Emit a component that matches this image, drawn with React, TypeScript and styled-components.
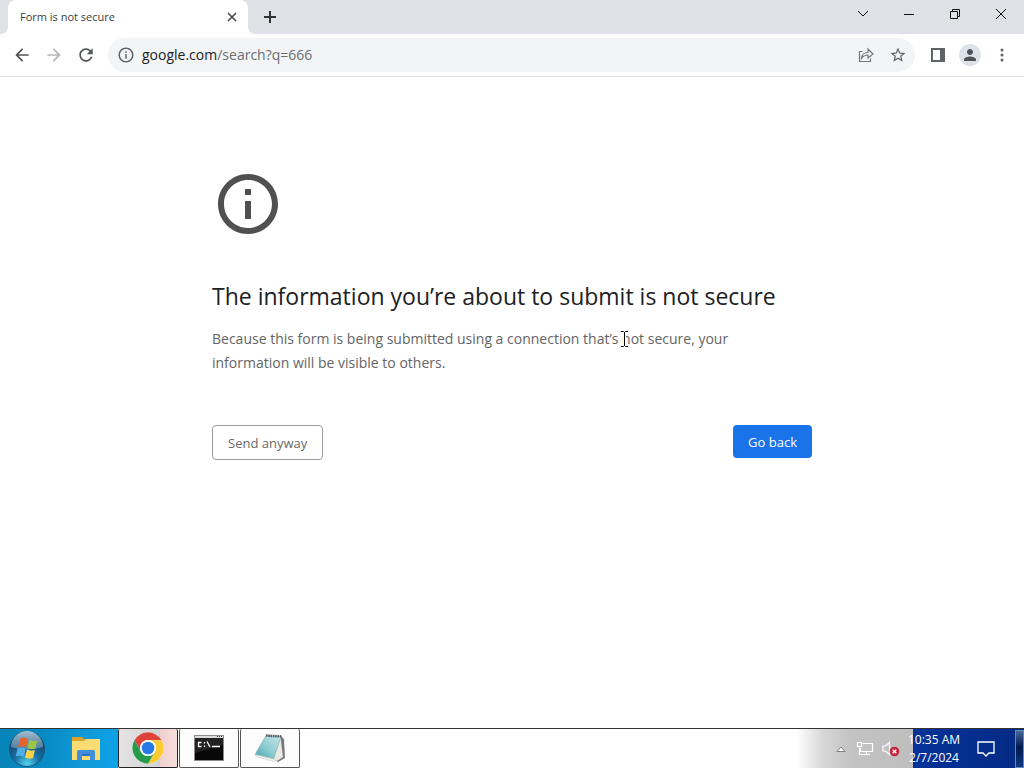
import React from "react";
import styled, { createGlobalStyle } from "styled-components";

const GlobalStyle = createGlobalStyle`
  * { box-sizing: border-box; }
  body { margin: 0; font-family: "Open Sans", "Noto Sans", sans-serif; background: #fff; }
  button { font-family: inherit; margin: 0; padding: 0; border: 0; background: none; }
  svg { display: block; }
`;

const Screen = styled.div`
  min-height: 100vh;
  display: flex;
  flex-direction: column;
`;

const TabStrip = styled.header`
  display: flex;
  align-items: stretch;
  height: 34px;
  padding-left: 8px;
  background: #dee1e6;
`;

const Tab = styled.div`
  position: relative;
  display: flex;
  align-items: center;
  justify-content: space-between;
  width: 240px;
  padding: 0 8px 0 12px;
  border-radius: 8px 8px 0 0;
  background: #fff;
  color: #3c4043;
  &::before, &::after {
    content: "";
    position: absolute;
    bottom: 0;
    width: 8px;
    height: 8px;
  }
  &::before { left: -8px; background: radial-gradient(circle at 0 0, #dee1e6 8px, #fff 8px); }
  &::after { right: -8px; background: radial-gradient(circle at 100% 0, #dee1e6 8px, #fff 8px); }
`;

const TabTitle = styled.span`
  font-size: 11px;
  line-height: 16px;
`;

const IconButton = styled.button<{ $w: number; $color?: string }>`
  display: flex;
  align-items: center;
  justify-content: center;
  flex: none;
  width: ${(p) => p.$w}px;
  color: ${(p) => p.$color ?? "#5f6368"};
`;

const WindowControls = styled.div`
  display: flex;
  align-items: stretch;
  margin-left: auto;
  padding-bottom: 6px;
`;

const Toolbar = styled.div`
  display: flex;
  align-items: center;
  height: 43px;
  padding: 0 6px;
  border-bottom: 1px solid #dadce0;
  background: #fff;
`;

const AddressBar = styled.div`
  display: flex;
  align-items: center;
  flex: 1;
  height: 34px;
  margin: 0 7px 0 6px;
  padding: 0 1px 0 2px;
  border-radius: 17px;
  background: #f2f4f5;
`;

const Url = styled.div`
  flex: 1;
  font-size: 14px;
  line-height: 20px;
  color: #6a6e72;
  b { font-weight: 400; color: #202124; }
`;

const Avatar = styled.span`
  display: flex;
  align-items: center;
  justify-content: center;
  width: 22px;
  height: 22px;
  border-radius: 50%;
  background: #dde1e8;
`;

const Page = styled.main`
  flex: 1;
  padding: 91px 24px 24px;
`;

const Warning = styled.section`
  max-width: 600px;
  margin: 0 auto;
`;

const Heading = styled.h1`
  margin: 40px 0 15px;
  font-size: 23px;
  font-weight: 400;
  line-height: 32px;
  color: #202124;
`;

const Message = styled.p`
  position: relative;
  margin: 0;
  padding-right: 48px;
  font-size: 14px;
  line-height: 24px;
  color: #646464;
`;

const TextCursor = styled.svg`
  position: absolute;
  left: 408px;
  top: 4px;
`;

const Actions = styled.div`
  display: flex;
  align-items: flex-start;
  justify-content: space-between;
  margin-top: 50px;
`;

const ActionButton = styled.button<{ $primary?: boolean }>`
  && {
    height: ${(p) => (p.$primary ? 33 : 35)}px;
    padding: 0 15px;
    border: ${(p) => (p.$primary ? "0" : "1px solid #9a9da0")};
    border-radius: 4px;
    background: ${(p) => (p.$primary ? "#1a73e8" : "#fff")};
    color: ${(p) => (p.$primary ? "#fff" : "#696969")};
    font-size: 13px;
  }
`;

const Taskbar = styled.footer`
  display: flex;
  align-items: stretch;
  height: 40px;
  border-top: 1px solid #333;
  background: #fff;
`;

const Launchers = styled.div`
  display: flex;
  width: 118px;
  background: linear-gradient(100deg, #0784b8 0%, #078ac2 35%, #1199d8 70%, #0ba2e9 100%);
`;

const TaskButton = styled.button<{ $active?: boolean }>`
  && {
    display: flex;
    align-items: center;
    justify-content: center;
    width: 60px;
    margin-right: 1px;
    border: 1px solid ${(p) => (p.$active ? "#222" : "#555")};
    border-top: 0;
    border-radius: 2px;
    background: ${(p) =>
      p.$active ? "linear-gradient(90deg, #e6e4e4 0%, #cfd2d5 70%, #f3cfd0 72%, #f6dede 100%)" : "#fdfdfd"};
  }
`;

const Tray = styled.div`
  display: flex;
  align-items: center;
  margin-left: auto;
  width: 228px;
  background: linear-gradient(90deg, #fff 0, #d8d8d8 26px, #c3c3c3 54px, #bebebe 117px, #05329a 117px, #032a83 100%);
`;

const TrayIcons = styled.div`
  display: flex;
  align-items: center;
  gap: 8px;
  padding-left: 38px;
`;

const Clock = styled.time`
  width: 62px;
  margin-left: 3px;
  font-size: 12px;
  line-height: 18px;
  text-align: center;
  white-space: nowrap;
  color: #fff;
`;

const ShowDesktop = styled.button`
  && {
    width: 9px;
    height: 38px;
    margin-left: auto;
    border: 1px solid #6787b9;
    background: linear-gradient(180deg, #476898, #02194f 45%, #0b3780);
  }
`;

const Stroke = ({ d, w, h, sw = 1 }: { d: string; w: number; h: number; sw?: number }) => (
  <svg width={w} height={h} viewBox={`0 0 ${w} ${h}`} fill="none" stroke="currentColor" strokeWidth={sw}>
    <path d={d} />
  </svg>
);

const Material = ({ d, size }: { d: string; size: number }) => (
  <svg width={size} height={size} viewBox="0 0 24 24" fill="currentColor">
    <path d={d} />
  </svg>
);

const INFO =
  "M11 17h2v-6h-2v6zm1-15C6.480 2 2 6.480 2 12s4.480 10 10 10 10-4.480 10-10S17.520 2 12 2zm0 18c-4.410 0-8-3.590-8-8s3.590-8 8-8 8 3.590 8 8-3.590 8-8 8zM11 9h2V7h-2v2z";
const BACK = "M20 11H7.830l5.590-5.590L12 4l-8 8 8 8 1.410-1.410L7.830 13H20v-2z";
const FORWARD = "M12 4l-1.410 1.410L16.170 11H4v2h12.170l-5.580 5.590L12 20l8-8z";
const RELOAD =
  "M17.650 6.350C16.200 4.900 14.210 4 12 4c-4.420 0-7.990 3.580-7.990 8s3.570 8 7.990 8c3.730 0 6.840-2.550 7.730-6h-2.080c-.820 2.330-3.040 4-5.650 4-3.310 0-6-2.690-6-6s2.690-6 6-6c1.660 0 3.140.690 4.220 1.780L13 11h7V4l-2.350 2.350z";
const STAR =
  "M22 9.240l-7.190-.620L12 2 9.190 8.630 2 9.240l5.460 4.730L5.820 21 12 17.270 18.180 21l-1.630-7.030L22 9.240zM12 15.400l-3.760 2.270 1-4.280-3.320-2.880 4.380-.380L12 6.100l1.710 4.040 4.380.380-3.320 2.880 1 4.280L12 15.400z";
const PERSON =
  "M12 12c2.210 0 4-1.790 4-4s-1.790-4-4-4-4 1.790-4 4 1.790 4 4 4zm0 2c-2.670 0-8 1.340-8 4v2h16v-2c0-2.660-5.330-4-8-4z";

const StartOrb = () => (
  <svg width="38" height="38" viewBox="0 0 38 38">
    <defs>
      <radialGradient id="orb" cx="50%" cy="92%" r="80%">
        <stop offset="0" stopColor="#52d7f0" />
        <stop offset=".45" stopColor="#176fa4" />
        <stop offset="1" stopColor="#164268" />
      </radialGradient>
      <linearGradient id="shine" x2="0" y2="1">
        <stop offset="0" stopColor="#b4cddd" stopOpacity=".9" />
        <stop offset="1" stopColor="#9cb9cc" stopOpacity=".4" />
      </linearGradient>
    </defs>
    <circle cx="19" cy="19" r="17.500" fill="url(#orb)" stroke="#175579" />
    <path d="M3 17a16 16 0 0 1 32 0q-16 5-32 0z" fill="url(#shine)" />
    <path d="M12.500 8.500q4-1.500 7.500.500l-2 8.500q-4-2-8-.500z" fill="#e8632c" />
    <path d="M21.300 10q3.700 1.800 8 .500l-2 8q-4 1.500-8-.500z" fill="#9cc545" />
    <path d="M9.700 18.300q4-1.500 8 .500l-2 8q-4-2-8-.500z" fill="#4eaee6" />
    <path d="M19 19.500q4 2 8 .500l-2 8q-4 1.500-8-.500z" fill="#fdd04a" />
  </svg>
);

const Folder = () => (
  <svg width="30" height="26" viewBox="0 0 30 26">
    <path d="M1 1h10l2 2h16v8H1z" fill="#dca52a" />
    <path d="M1 5h12l2-2h14v21H1z" fill="#fbdc72" />
    <path d="M6 24v-8q0-2 2-2h14q2 0 2 2v8h-5v-5h-8v5z" fill="#418fdc" />
    <path d="M11 18h8v2h-8z" fill="#2d6fc1" />
  </svg>
);

const ChromeLogo = () => (
  <svg width="32" height="32" viewBox="0 0 48 48">
    <circle cx="24" cy="24" r="23.500" fill="#fff" />
    <path d="M3.650 12.250A23.500 23.500 0 0 1 44.350 12.250H24A11.750 11.750 0 0 0 13.820 29.880z" fill="#dd4338" />
    <path d="M44.350 12.250A23.500 23.500 0 0 1 24 47.500L34.180 29.880A11.750 11.750 0 0 0 24 12.250z" fill="#fccc32" />
    <path d="M24 47.500A23.500 23.500 0 0 1 3.650 12.250L13.820 29.880A11.750 11.750 0 0 0 34.180 29.880z" fill="#279b4d" />
    <circle cx="24" cy="24" r="12" fill="#fff" />
    <circle cx="24" cy="24" r="9.500" fill="#2879e8" />
  </svg>
);

const Terminal = () => (
  <svg width="30" height="26" viewBox="0 0 30 26">
    <path d="M0 0h30v26H0z" fill="#8a8a8a" />
    <path d="M1 1h28v2H1z" fill="#ddd" />
    <path d="M23 1h1v1h-1zM25 1h1v1h-1zM27 1h1v1h-1z" fill="#333" />
    <path d="M1 3h28v22H1z" fill="#080808" />
    <path d="M1 3h28v7L1 18z" fill="#222" />
    <path d="M7.500 7.500H4.500v4h3M10.500 7v1.500M10.500 10.500v1.500M13 6.500l3 5.500M18 11.500h8" fill="none" stroke="#fff" strokeWidth="1.300" />
  </svg>
);

const Notepad = () => (
  <svg width="32" height="30" viewBox="0 0 32 30">
    <defs>
      <linearGradient id="note" x1="1" x2="0" y2="1">
        <stop offset="0" stopColor="#c9e8ea" />
        <stop offset=".55" stopColor="#8bcbd0" />
        <stop offset="1" stopColor="#43a3ae" />
      </linearGradient>
    </defs>
    <path d="M27 3l3 3 1 19-7 4-3-2z" fill="#777a79" />
    <path d="M26.500 4l2.500 20-6 4-4-2z" fill="#e9e8e2" />
    <path d="M12 2.500l15 1L19.500 26 1 21.500z" fill="url(#note)" stroke="#79a8ad" strokeWidth=".600" />
    <path d="M1 21.500L19.500 26l3 2-2 .800L2 23.500z" fill="#f4f4ef" stroke="#b9c1bd" strokeWidth=".500" />
    <path d="M12 2.500l16 1" stroke="#555" strokeWidth="2.500" strokeDasharray="1.500 .8" />
  </svg>
);

export default function App() {
  return (
    <Screen>
      <GlobalStyle />
      <TabStrip>
        <Tab>
          <TabTitle>Form is not secure</TabTitle>
          <IconButton $w={16} $color="#45494d" aria-label="Close tab">
            <Stroke w={10} h={10} sw={1.6} d="M1 1l8 8M9 1l-8 8" />
          </IconButton>
        </Tab>
        <IconButton $w={44} $color="#303336" aria-label="New tab">
          <Stroke w={12} h={12} sw={2} d="M6 0v12M0 6h12" />
        </IconButton>
        <WindowControls>
          <IconButton $w={46} $color="#111" aria-label="Search tabs">
            <Stroke w={12} h={8} d="M1 1l5 5 5-5" />
          </IconButton>
          <IconButton $w={46} $color="#111" aria-label="Minimize">
            <Stroke w={10} h={1} sw={2} d="M0 0h10" />
          </IconButton>
          <IconButton $w={46} $color="#111" aria-label="Restore">
            <Stroke w={10} h={10} d="M.5 2.500h7v7h-7zM2.500 2.500v-2h7v7h-2" />
          </IconButton>
          <IconButton $w={46} $color="#111" aria-label="Close">
            <Stroke w={12} h={12} d="M1 1l10 10M11 1L1 11" />
          </IconButton>
        </WindowControls>
      </TabStrip>
      <Toolbar>
        <IconButton $w={32} $color="#505357" aria-label="Back"><Material d={BACK} size={20} /></IconButton>
        <IconButton $w={32} $color="#b4b6b8" aria-label="Forward"><Material d={FORWARD} size={20} /></IconButton>
        <IconButton $w={32} $color="#505357" aria-label="Reload"><Material d={RELOAD} size={20} /></IconButton>
        <AddressBar>
          <IconButton $w={32} aria-label="Site information"><Material d={INFO} size={18} /></IconButton>
          <Url><b>google.com</b>/search?q=666</Url>
          <IconButton $w={32} $color="#74777b" aria-label="Share">
            <Stroke w={16} h={16} sw={1.2} d="M4.500 4.500H1.500v10h11v-3M3.500 11.500q.5-6 6.500-6v-3.500l5 5-5 4V8q-4 0-6.500 3.500z" />
          </IconButton>
          <IconButton $w={32} aria-label="Bookmark"><Material d={STAR} size={18} /></IconButton>
        </AddressBar>
        <IconButton $w={32} aria-label="Side panel">
          <svg width="14" height="14" viewBox="0 0 14 14">
            <path d="M0 0h14v14H0zM2 2v10h7V2z" fill="currentColor" fillRule="evenodd" />
          </svg>
        </IconButton>
        <IconButton $w={32} $color="#4d5258" aria-label="Profile">
          <Avatar><Material d={PERSON} size={18} /></Avatar>
        </IconButton>
        <IconButton $w={32} aria-label="Menu">
          <svg width="4" height="14" viewBox="0 0 4 14" fill="currentColor">
            <circle cx="2" cy="2" r="1.500" />
            <circle cx="2" cy="7" r="1.500" />
            <circle cx="2" cy="12" r="1.500" />
          </svg>
        </IconButton>
      </Toolbar>
      <Page>
        <Warning>
          <svg width="72" height="72" viewBox="0 0 24 24" fill="#505050"><path d={INFO} /></svg>
          <Heading>The information you’re about to submit is not secure</Heading>
          <Message>
            Because this form is being submitted using a connection that’s not secure, your information will be visible
            to others.
            <TextCursor width="9" height="16" viewBox="0 0 9 16" fill="none">
              <path d="M1 .5h2.500l1 1 1-1H8M4.500 1v14M1 15.500h2.500l1-1 1 1H8" stroke="#fff" strokeWidth="3" />
              <path d="M1 .5h2.500l1 1 1-1H8M4.500 1v14M1 15.500h2.500l1-1 1 1H8" stroke="#000" />
            </TextCursor>
          </Message>
          <Actions>
            <ActionButton>Send anyway</ActionButton>
            <ActionButton $primary>Go back</ActionButton>
          </Actions>
        </Warning>
      </Page>
      <Taskbar>
        <Launchers>
          <IconButton $w={54} aria-label="Start"><StartOrb /></IconButton>
          <IconButton $w={64} aria-label="File Explorer"><Folder /></IconButton>
        </Launchers>
        <TaskButton $active aria-label="Chrome"><ChromeLogo /></TaskButton>
        <TaskButton aria-label="Command Prompt"><Terminal /></TaskButton>
        <TaskButton aria-label="Notepad"><Notepad /></TaskButton>
        <Tray>
          <TrayIcons>
            <IconButton $w={14} aria-label="Show hidden icons">
              <svg width="10" height="6" viewBox="0 0 10 6">
                <path d="M1 5.500L5 1l4 4.500z" fill="#fff" stroke="#666" strokeWidth=".8" />
              </svg>
            </IconButton>
            <IconButton $w={18} $color="#fff" aria-label="Network">
              <Stroke w={18} h={15} sw={1.2} d="M6 2.500h10.500v8H4.500V7M10.500 10.500v3M7 13.500h7M1.500 1.500h4v4h-4zM3.500 5.500v8H7" />
            </IconButton>
            <IconButton $w={18} $color="#fff" aria-label="Volume">
              <svg width="18" height="16" viewBox="0 0 18 16" fill="none">
                <path d="M1 5h2.500L7.500 1.500v12L3.500 10H1z" stroke="currentColor" strokeWidth="1.200" />
                <circle cx="12.500" cy="10.500" r="4.800" fill="#c4253a" />
                <path d="M10.700 8.700l3.600 3.600M14.300 8.700l-3.600 3.600" stroke="#fff" strokeWidth="1.400" />
              </svg>
            </IconButton>
          </TrayIcons>
          <Clock>10:35 AM<br />2/7/2024</Clock>
          <IconButton $w={42} $color="#fff" aria-label="Notifications">
            <Stroke w={18} h={16} sw={1.3} d="M1 1h16v11h-5l-3 3-3-3H1z" />
          </IconButton>
          <ShowDesktop aria-label="Show desktop" />
        </Tray>
      </Taskbar>
    </Screen>
  );
}
